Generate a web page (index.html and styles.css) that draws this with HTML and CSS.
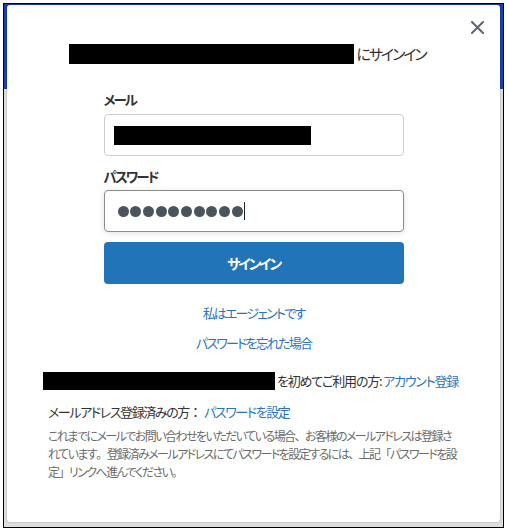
FILE: index.html
```html
<!DOCTYPE html>
<html lang="ja">
<head>
<meta charset="utf-8">
<title>サインイン</title>
<link rel="stylesheet" href="styles.css">
</head>
<body>
<div class="frame">
  <div class="modal">
    <button class="close" aria-label="閉じる">
      <svg width="13" height="13" viewBox="0 0 13 13"><path d="M1 1 L12 12 M12 1 L1 12" stroke="#5d6670" stroke-width="2" stroke-linecap="square"/></svg>
    </button>
    <h1 class="title"><span class="redact redact-title"></span><span>にサインイン</span></h1>
    <form class="form">
      <label class="label">メール</label>
      <div class="input"><span class="redact redact-email"></span></div>
      <label class="label label-pw">パスワード</label>
      <div class="input input-focus">
        <span class="dots"><i></i><i></i><i></i><i></i><i></i><i></i><i></i><i></i><i></i><i></i></span><span class="caret"></span>
      </div>
      <div class="btn">サインイン</div>
    </form>
    <div class="links">
      <a class="link">私はエージェントです</a>
      <a class="link">パスワードを忘れた場合</a>
    </div>
    <p class="first"><span class="redact redact-row"></span>を初めてご利用の方: <a class="link">アカウント登録</a></p>
    <div class="existing">
      <p class="existing-head">メールアドレス登録済みの方<span class="fw">：</span> <a class="link">パスワードを設定</a></p>
      <p class="note">これまでにメールでお問い合わせをいただいている場合<span class="fw">、</span>お客様のメールアドレスは登録されています<span class="fw">。</span>登録済みメールアドレスにてパスワードを設定するには<span class="fw">、</span>上記<span class="fw">「</span>パスワードを設定<span class="fw">」</span>リンクへ進んでください<span class="fw">。</span></p>
    </div>
  </div>
</div>
</body>
</html>
```
FILE: styles.css
```css
* { box-sizing: border-box; }
html, body { margin: 0; padding: 0; background: #fff; }
body {
  font-family: "Noto Sans CJK JP", "Noto Sans", sans-serif;
  font-feature-settings: "palt";
  color: #333;
  width: 507px;
  height: 531px;
  overflow: hidden;
}
.frame {
  margin: 3px;
  width: 501px;
  height: 525px;
  border: 1px solid #000;
  background: linear-gradient(#1b3fb3 0, #1b3fb3 85px, #dedede 85px);
  padding: 1px 3px 5px 3px;
  display: flex;
}
.modal {
  flex: 1;
  background: #fff;
  border-radius: 3px;
  box-shadow: 0 0 2px rgba(0,0,0,0.35);
  position: relative;
  padding-top: 37px;
}
.close {
  position: absolute;
  top: 16px;
  right: 15px;
  width: 14px;
  height: 14px;
  padding: 0;
  border: 0;
  background: none;
  display: flex;
}
.title {
  margin: 0;
  height: 24px;
  display: flex;
  justify-content: center;
  align-items: center;
  padding-right: 12px;
  font-size: 15px;
  font-weight: normal;
  letter-spacing: -2.1px;
  color: #333;
  line-height: 24px;
}
.redact { display: inline-block; background: #000; }
.redact-title { width: 285px; height: 20px; margin-right: 2px; }
.form {
  width: 300px;
  margin: 23px auto 0;
  display: flex;
  flex-direction: column;
}
.label {
  font-size: 13.5px;
  font-weight: bold;
  line-height: 20px;
  height: 20px;
  margin-bottom: 5px;
  letter-spacing: -1.9px;
  color: #333;
}
.label-pw { margin-top: 10px; margin-bottom: 4px; }
.input {
  height: 42px;
  border: 1px solid #cfcfcf;
  border-radius: 4px;
  display: flex;
  align-items: center;
  padding-left: 9px;
}
.redact-email { width: 197px; height: 19px; }
.input-focus {
  border-color: #8c8c8c;
  box-shadow: 0 1px 6px rgba(0,0,0,0.12);
  padding-left: 13px;
}
.dots { display: flex; gap: 1.7px; }
.dots i {
  width: 11px;
  height: 11px;
  border-radius: 50%;
  background: #4b535d;
}
.caret {
  width: 1px;
  height: 18px;
  background: #222;
  margin-left: 1px;
}
.btn {
  margin-top: 10px;
  height: 42px;
  background: #2174b8;
  border-radius: 4px;
  color: #fff;
  font-weight: bold;
  font-size: 14px;
  letter-spacing: -2.3px;
  display: flex;
  align-items: center;
  justify-content: center;
}
.links {
  margin-top: 19px;
  display: flex;
  flex-direction: column;
  align-items: center;
  gap: 10px;
}
.link {
  color: #2b74b8;
  font-size: 13px;
  line-height: 20px;
  text-decoration: none;
}
.links .link { letter-spacing: -1.8px; }
.first {
  margin: 18px 0 0;
  padding-right: 6px;
  display: flex;
  justify-content: center;
  align-items: center;
  font-size: 13px;
  line-height: 20px;
  letter-spacing: -1.2px;
  white-space: pre;
}
.redact-row { width: 232px; height: 18px; margin-right: 2px; }
.existing { padding: 0 39px 0 41px; margin-top: 11px; }
.fw { font-feature-settings: normal; }
.existing-head {
  margin: 0;
  font-size: 13px;
  line-height: 20px;
  letter-spacing: -1.4px;
  word-spacing: 2px;
}
.note {
  margin: 5px 0 0;
  font-size: 12px;
  line-height: 18px;
  letter-spacing: -1.55px;
  color: #6b6b6b;
}
```
